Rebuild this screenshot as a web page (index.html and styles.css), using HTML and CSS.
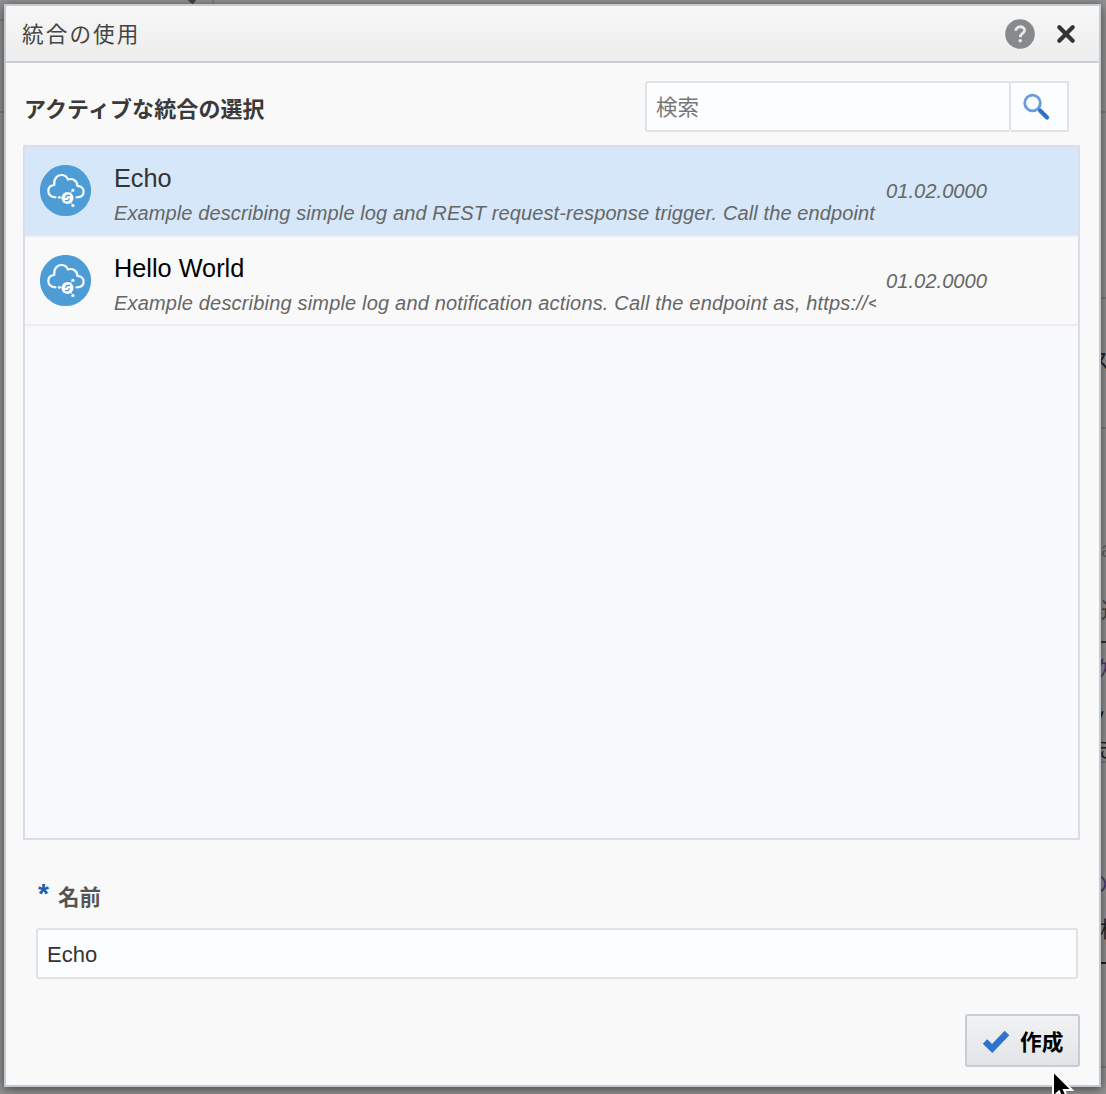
FILE: index.html
```html
<!DOCTYPE html>
<html lang="ja">
<head>
<meta charset="utf-8">
<title>統合の使用</title>
<link rel="stylesheet" href="styles.css">
</head>
<body>
<svg class="defs" aria-hidden="true">
  <symbol id="cloud" viewBox="0 0 52 52">
    <circle cx="25.500" cy="25.500" r="25.600" fill="#4e9cd5"/>
    <path d="M15.500 32.300C10.500 32 8.300 29 8.300 25.800C8.300 22.500 10.800 20.300 14.300 19.800C13.500 14 17 10 21.500 10C25 10 27 12 28 14.500C32.500 12.800 37.500 16 37.300 20.800C41 21 43.600 23.500 43.600 26.500C43.600 30 41 32.300 36.500 32.300" fill="none" stroke="#f4faff" stroke-width="2.200" stroke-linecap="round" stroke-linejoin="round"/>
    <path d="M20 32.500H24M30.500 28L32.700 25.500M31 37.500L32.700 40" stroke="#fff" stroke-width="1" opacity=".7"/>
    <circle cx="27.500" cy="33" r="6" fill="#fff"/>
    <circle cx="32.900" cy="25.200" r="1.500" fill="#fff"/>
    <circle cx="32.900" cy="40.500" r="1.600" fill="#fff"/>
    <circle cx="19.300" cy="32.400" r="1.400" fill="#fff"/>
    <path d="M30 30.500H26.800L25.500 33M29.500 33.200L28.200 35.700H25" fill="none" stroke="#4e9cd5" stroke-width="1.300"/>
  </symbol>
</svg>
<div class="page-behind" aria-hidden="true">
  <span class="frag f1">ス</span><span class="frag f2">a</span><span class="frag f3">連</span>
  <span class="frag f4">次</span><span class="frag f5">ノ</span><span class="frag f6">き</span>
  <span class="frag f7">の</span><span class="frag f8">検</span>
  <i class="rule r1"></i><i class="rule r2"></i><i class="rule r3"></i><i class="rule r4"></i><i class="rule r5"></i><i class="rule r6"></i><i class="rule r7"></i><i class="rule r8"></i><i class="rule r9"></i><i class="divider"></i><i class="nub"></i>
</div>
<main class="dialog">
  <header class="head">
    <h1 class="title">統合の使用</h1>
    <svg class="help" viewBox="0 0 30 30"><circle cx="15" cy="15" r="14.800" fill="#878a8c"/><path d="M10.800 11.800c0-5.300 8.800-5.300 8.800-.6 0 3.300-4.300 3.200-4.300 7" fill="none" stroke="#e9eaea" stroke-width="2.800"/><circle cx="15.200" cy="21.800" r="1.800" fill="#e9eaea"/></svg>
    <svg class="close" viewBox="0 0 20 20"><path d="M3.300 3.300L16.700 16.700M16.700 3.300L3.300 16.700" stroke="#333638" stroke-width="4.200" stroke-linecap="round"/></svg>
  </header>
  <div class="toolbar">
    <h2 class="subtitle">アクティブな統合の選択</h2>
    <div class="search"><div class="search-input">検索</div><div class="search-button"><svg viewBox="0 0 28 28"><circle cx="10.500" cy="10" r="7.800" fill="none" stroke="#6a9bdc" stroke-width="2.800"/><path d="M18 17.500L25 24.500" stroke="#2f70c6" stroke-width="4.200" stroke-linecap="round"/></svg></div></div>
  </div>
  <div class="list">
    <div class="row selected">
      <svg class="cloud"><use href="#cloud"/></svg>
      <div class="info"><div class="name">Echo</div><div class="desc d1">Example describing simple log and REST request-response trigger. Call the endpoint</div></div>
      <div class="version">01.02.0000</div>
    </div>
    <div class="row">
      <svg class="cloud"><use href="#cloud"/></svg>
      <div class="info"><div class="name">Hello World</div><div class="desc d2">Example describing simple log and notification actions. Call the endpoint as, https://&lt;</div></div>
      <div class="version">01.02.0000</div>
    </div>
  </div>
  <div class="field">
    <div class="label"><span class="star">*</span><span>名前</span></div>
    <div class="input">Echo</div>
  </div>
  <footer class="foot">
    <div class="create"><svg viewBox="0 0 30 26"><path d="M4 13.500L11.200 20.500L26 5" fill="none" stroke="#2f74cc" stroke-width="6.400"/></svg><span>作成</span></div>
  </footer>
</main>
<svg class="cursor" viewBox="0 0 26 36"><path d="M2 2V28L8 22.500L13 34L18 32L13 21H21Z" fill="#000" stroke="#fff" stroke-width="2"/></svg>
</body>
</html>
```
FILE: styles.css
```css
* { box-sizing: border-box; }
body {
  margin: 0;
  width: 1106px;
  height: 1094px;
  padding: 4px 0 0 4px;
  overflow: hidden;
  position: relative;
  background: #929292;
  font-family: "Liberation Sans", "Noto Sans CJK JP", sans-serif;
}
.defs { position: absolute; width: 0; height: 0; }
.page-behind { position: absolute; inset: 0; overflow: hidden; }
.frag { position: absolute; font-size: 22px; line-height: 30px; color: #222; }
.f1 { left: 1088px; top: 346px; }
.f2 { left: 1101px; top: 535px; color: #666; }
.f3 { left: 1101px; top: 596px; color: #444; }
.f4 { left: 1092px; top: 655px; color: #4b3a70; }
.f5 { left: 1086px; top: 705px; }
.f6 { left: 1097px; top: 735px; }
.f7 { left: 1086px; top: 869px; color: #4b3a70; }
.f8 { left: 1100px; top: 915px; }
.rule { position: absolute; left: 1100px; width: 6px; height: 2px; background: #7d7d7f; }
.r1 { top: 111px; }
.r2 { top: 297px; }
.r3 { top: 427px; }
.r4 { top: 641px; background: #333; }
.r5 { top: 761px; }
.r6 { top: 962px; background: #222; }
.r7 { top: 1066px; }
.r8 { left: 0; top: 19px; }
.r9 { left: 0; top: 111px; }
.divider { position: absolute; left: 212px; top: 0; width: 2px; height: 5px; background: #7d7d7f; }
.nub { position: absolute; left: 189px; top: -2px; width: 6px; height: 5px; background: #444; transform: rotate(40deg); }

.dialog {
  position: relative;
  display: flex;
  flex-direction: column;
  width: 1097px;
  height: 1083px;
  border: 2px solid #c3cad2;
  background: #f9f9f9;
  box-shadow: 0 2px 10px rgba(0, 0, 0, .55);
}
.head {
  display: flex;
  align-items: center;
  height: 57px;
  padding: 0 23px 0 16px;
  border-bottom: 2px solid #c9cfd6;
  background: linear-gradient(#f7f7f7, #ededed);
}
.title { flex: 1; margin: -3px 0 0; font-weight: 400; font-size: 21.600px; letter-spacing: 2.100px; color: #444; }
.help { width: 30px; height: 30px; margin-right: 21px; }
.close { width: 20px; height: 20px; }
.toolbar { display: flex; justify-content: space-between; height: 82px; padding: 18px 30px 0 18px; }
.subtitle { margin: 13px 0 0; font-size: 22px; line-height: 32px; font-weight: 700; letter-spacing: .1px; color: #3a3a3a; }
.search { display: flex; height: 51px; }
.search-input {
  width: 366px;
  padding: 1px 9px 0;
  border: 2px solid #dfe3e6;
  border-radius: 3px;
  background: #fcfdfe;
  font-size: 21.500px;
  line-height: 49px;
  color: #777;
}
.search-button { width: 58px; padding: 10px 0 0 11px; border: 2px solid #dfe3e6; border-left: 0; background: #fcfdfe; }
.search-button svg { display: block; width: 28px; height: 28px; }
.list { width: 1057px; height: 695px; margin-left: 17px; border: 2px solid #d8dfe8; background: #f7f9fd; }
.row { display: flex; height: 89.500px; padding: 18px 0 0 15px; border-bottom: 2px solid #ececee; background: #f9f9f9; }
.row.selected { background: #d5e7f9; }
.cloud { flex: none; width: 52px; height: 52px; }
.info { width: 762px; margin: -2px 0 0 22px; overflow: hidden; }
.name { font-size: 25.300px; line-height: 30px; color: #000; }
.selected .name { color: #333; }
.desc { margin-top: 6px; font-size: 20px; line-height: 28px; font-style: italic; white-space: nowrap; color: #666; }
.d1 { letter-spacing: .11px; }
.d2 { letter-spacing: .18px; }
.version { margin: 12px 0 0 10px; font-size: 20.200px; line-height: 28px; font-style: italic; color: #666; }
.field { padding: 43px 0 0 30px; }
.label { display: flex; height: 45px; font-size: 21.500px; line-height: 31px; font-weight: 700; color: #555; }
.star { width: 22px; padding-left: 2px; font-size: 28px; line-height: 22px; color: #1c5fae; }
.input {
  width: 1042px;
  height: 51px;
  padding: 1px 9px 0;
  border: 2px solid #dfe3e6;
  border-radius: 3px;
  background: #fcfdfe;
  font-size: 22px;
  line-height: 48px;
  color: #333;
}
.foot { display: flex; justify-content: flex-end; padding: 35px 19px 0 0; }
.create {
  display: flex;
  align-items: center;
  gap: 9px;
  width: 115px;
  height: 53px;
  padding-left: 14px;
  border: 2px solid #c6cdd5;
  border-radius: 3px;
  background: linear-gradient(#f1f2f4, #e2e5e8);
  font-size: 21.700px;
  font-weight: 700;
  color: #000;
  white-space: nowrap;
}
.create span { margin-top: -1px; }
.create svg { width: 30px; height: 26px; }
.cursor { position: absolute; left: 1051px; top: 1069px; width: 26px; height: 36px; }
```
